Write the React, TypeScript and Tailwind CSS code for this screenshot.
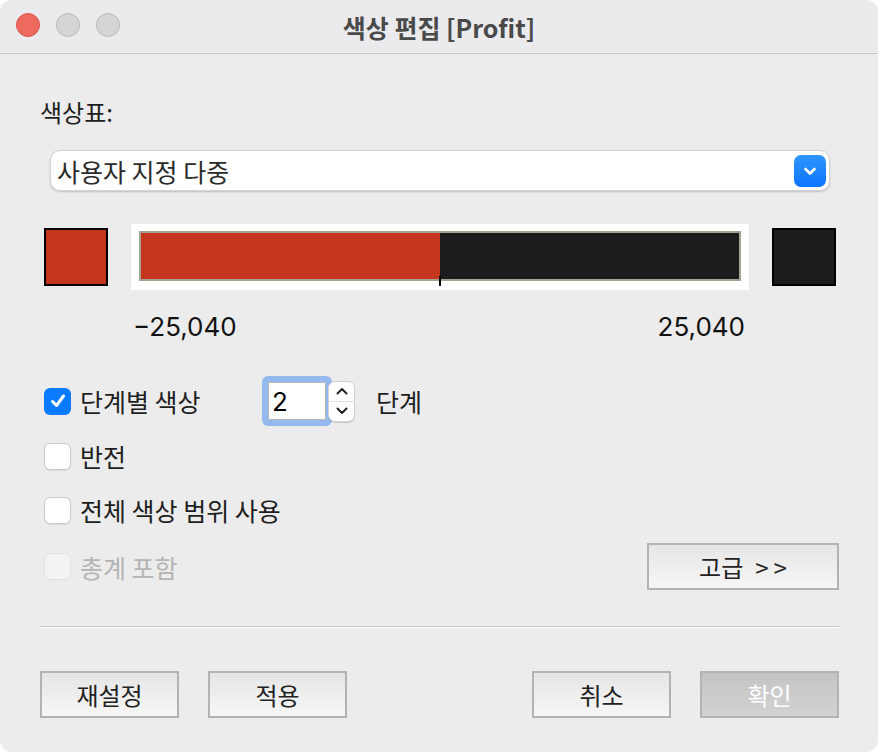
import React from "react";

const FONT = { fontFamily: '"Noto Sans CJK KR", "Noto Sans", sans-serif' };
const NUM_FONT = { fontFamily: 'Inter, "Noto Sans", sans-serif' };

function Check({ checked, disabled }: { checked?: boolean; disabled?: boolean }) {
  if (checked) {
    return (
      <span className="flex h-[27px] w-[27px] shrink-0 items-center justify-center rounded-[6px] bg-[#0a7aff]">
        <svg width="18" height="18" viewBox="0 0 18 18">
          <path d="M3.5 9.5 L7.5 13.5 L14.5 4" fill="none" stroke="white" strokeWidth="3" strokeLinecap="round" strokeLinejoin="round" />
        </svg>
      </span>
    );
  }
  return (
    <span
      className={
        disabled
          ? "block h-[27px] w-[27px] shrink-0 rounded-[6px] border border-[#e0e0e0] bg-[#f3f3f3]"
          : "block h-[27px] w-[27px] shrink-0 rounded-[6px] border border-[#c9c9c9] bg-white shadow-[0_1px_1px_rgba(0,0,0,0.08)]"
      }
    />
  );
}

function Btn({ label, disabled }: { label: string; disabled?: boolean }) {
  return (
    <button
      className={
        disabled
          ? "flex h-[47px] w-[139px] items-center justify-center border-2 border-[#b3b3b3] bg-gradient-to-b from-[#c4c4c4] to-[#d2d2d2] text-[24px] text-white"
          : "flex h-[47px] w-[139px] items-center justify-center border-2 border-[#b3b3b3] bg-gradient-to-b from-[#e6e6e6] to-[#f6f6f6] text-[24px] text-[#222]"
      }
    >
      {label}
    </button>
  );
}

export default function App() {
  return (
    <div className="h-[752px] w-[878px] overflow-hidden bg-white" style={FONT}>
      <div className="flex h-full w-full flex-col overflow-hidden rounded-[12px] bg-[#ececec]">
        {/* title bar */}
        <div className="relative flex h-[54px] shrink-0 items-center justify-center border-b border-[#c8c8c8] bg-[#ebebed]">
          <div className="absolute left-[16px] top-[13px] flex gap-[16px]">
            <span className="h-[24px] w-[24px] rounded-full border border-[#d9534a] bg-[#ee6a5f]" />
            <span className="h-[24px] w-[24px] rounded-full border border-[#b9b9b9] bg-[#d5d5d5]" />
            <span className="h-[24px] w-[24px] rounded-full border border-[#b9b9b9] bg-[#d5d5d5]" />
          </div>
          <span className="text-[25px] font-bold leading-[30px] text-[#4a4a4a]">색상 편집 [Profit]</span>
        </div>

        <div className="flex flex-1 flex-col pl-[40px] pr-[39px]">
          <div className="mt-[44px] text-[24px] leading-[28px] text-[#1e1e1e]">색상표:</div>

          {/* dropdown */}
          <div className="ml-[10px] mr-[9px] mt-[24px] flex h-[41px] items-center justify-between rounded-[10px] border border-[#d4d4d4] bg-white pl-[6px] pr-[3px] shadow-[0_1px_2px_rgba(0,0,0,0.2)]">
            <span className="text-[25px] leading-[30px] text-[#2a2a2a]">사용자 지정 다중</span>
            <span className="flex h-[32px] w-[32px] items-center justify-center rounded-[7px] bg-gradient-to-b from-[#2f95ff] to-[#0a75ff]">
              <svg width="16" height="16" viewBox="0 0 16 16">
                <path d="M3.5 6 L8 10.5 L12.5 6" fill="none" stroke="white" strokeWidth="2.6" strokeLinecap="round" strokeLinejoin="round" />
              </svg>
            </span>
          </div>

          {/* colour ramp */}
          <div className="mt-[33px] flex items-center">
            <div className="ml-[4px] h-[58px] w-[64px] border-2 border-black bg-[#c4351e]" />
            <div className="ml-[23px] bg-white px-[8px] pb-[9px] pt-[7px]">
              <div className="relative flex h-[50px] w-[602px] border-2 border-[#a5a394]">
                <div className="h-full w-[299px] bg-[#c4351e]" />
                <div className="h-full flex-1 bg-[#1c1c1c]" />
                <span className="absolute bottom-[-7px] left-[298px] h-[10px] w-[2px] bg-black" />
              </div>
            </div>
            <div className="ml-[23px] h-[58px] w-[64px] border-2 border-black bg-[#1c1c1c]" />
          </div>

          <div
            className="ml-[93px] mr-[94px] mt-[22px] flex justify-between text-[26px] leading-[30px] text-[#111]"
            style={NUM_FONT}
          >
            <span>−25,040</span>
            <span>25,040</span>
          </div>

          {/* options */}
          <div className="mt-[34px] flex h-[50px] items-center">
            <span className="ml-[4px]"><Check checked /></span>
            <span className="ml-[9px] w-[182px] text-[25px] leading-[30px] text-[#1e1e1e]">단계별 색상</span>
            <div className="rounded-[6px] bg-[#93b9ef] p-[6px]">
              <div className="flex h-[38px] w-[58px] items-center border border-[#b8b8b8] bg-white pl-[3px] text-[26px] text-black" style={NUM_FONT}>2</div>
            </div>
            <div className="ml-[-4px] flex h-[41px] w-[27px] flex-col rounded-[7px] border border-[#d2d2d2] bg-white shadow-[0_1px_1px_rgba(0,0,0,0.15)]">
              <div className="flex flex-1 items-center justify-center border-b border-[#e2e2e2]">
                <svg width="14" height="10" viewBox="0 0 14 10"><path d="M2.5 7.5 L7 3 L11.5 7.5" fill="none" stroke="#222" strokeWidth="2" strokeLinecap="round" strokeLinejoin="round" /></svg>
              </div>
              <div className="flex flex-1 items-center justify-center">
                <svg width="14" height="10" viewBox="0 0 14 10"><path d="M2.5 2.5 L7 7 L11.5 2.5" fill="none" stroke="#222" strokeWidth="2" strokeLinecap="round" strokeLinejoin="round" /></svg>
              </div>
            </div>
            <span className="ml-[21px] text-[25px] leading-[30px] text-[#1e1e1e]">단계</span>
          </div>

          <div className="mt-[16px] flex h-[28px] items-center">
            <span className="ml-[4px]"><Check /></span>
            <span className="ml-[9px] text-[25px] leading-[30px] text-[#1e1e1e]">반전</span>
          </div>

          <div className="mt-[26px] flex h-[28px] items-center">
            <span className="ml-[4px]"><Check /></span>
            <span className="ml-[9px] text-[25px] leading-[30px] text-[#1e1e1e]">전체 색상 범위 사용</span>
          </div>

          <div className="mt-[19px] flex h-[47px] items-center justify-between">
            <div className="flex items-center">
              <span className="ml-[4px]"><Check disabled /></span>
              <span className="ml-[9px] text-[25px] leading-[30px] text-[#b4b4b4]">총계 포함</span>
            </div>
            <button className="flex h-[47px] w-[192px] items-center justify-center border-2 border-[#b3b3b3] bg-gradient-to-b from-[#e6e6e6] to-[#f6f6f6] text-[24px] text-[#222]">
              고급<span className="ml-[12px]">&gt;</span><span className="ml-[5px]">&gt;</span>
            </button>
          </div>

          <div className="mt-[36px] h-[2px] border-t border-[#c4c4c4] border-b border-b-white" />

          <div className="mt-[43px] flex items-center">
            <Btn label="재설정" />
            <span className="ml-[29px]"><Btn label="적용" /></span>
            <span className="ml-auto"><Btn label="취소" /></span>
            <span className="ml-[29px]"><Btn label="확인" disabled /></span>
          </div>
        </div>
      </div>
    </div>
  );
}
